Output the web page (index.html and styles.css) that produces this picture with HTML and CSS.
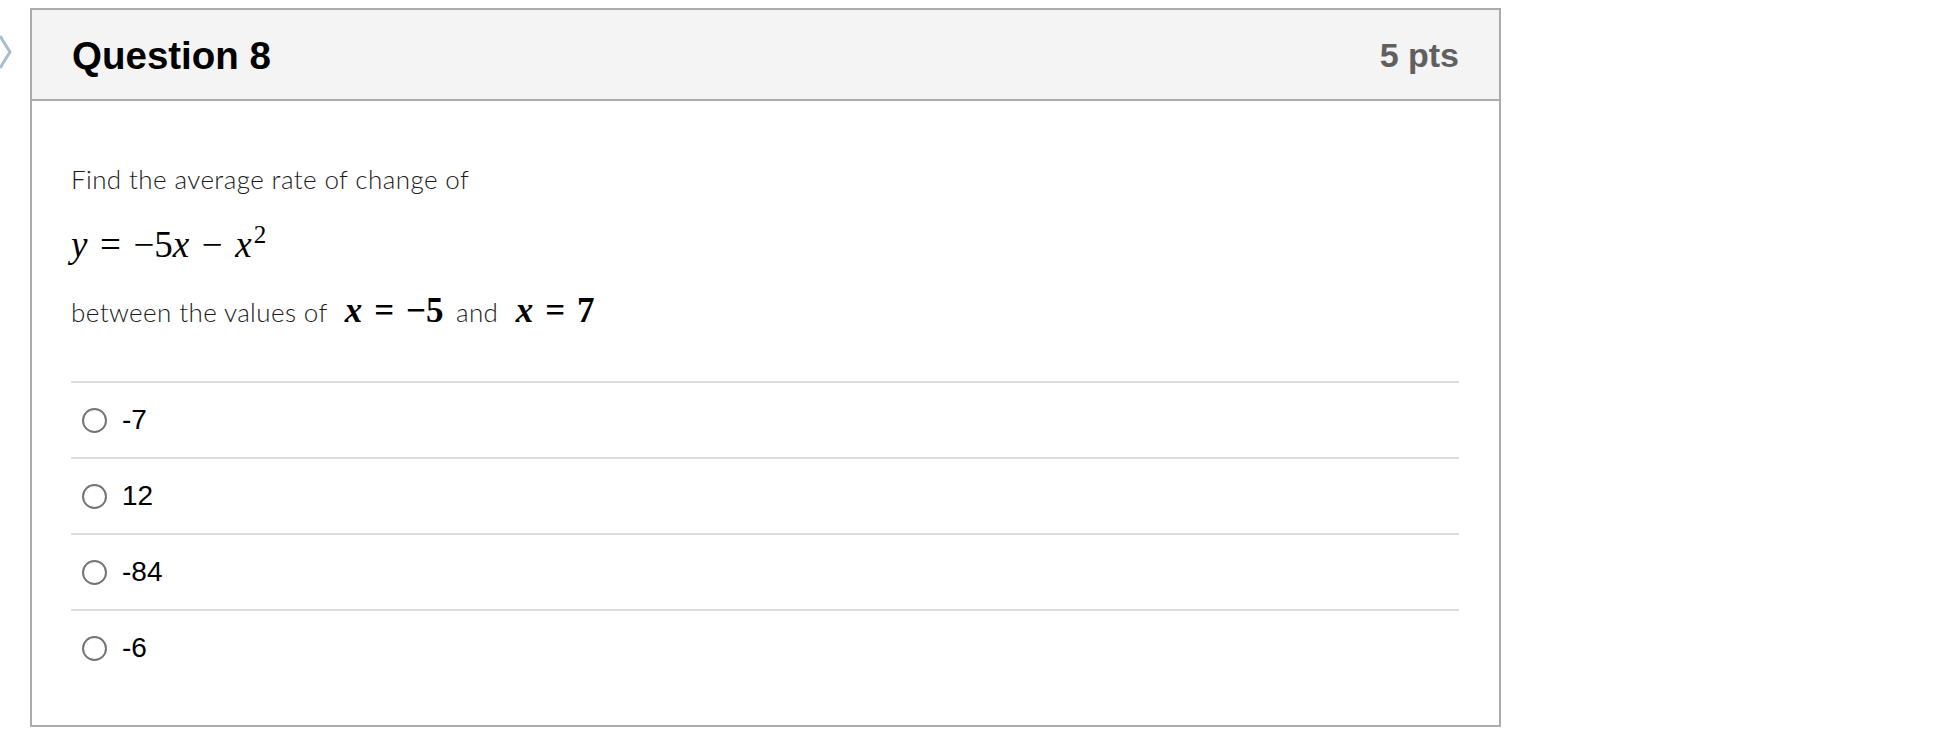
FILE: index.html
```html
<!DOCTYPE html>
<html>
<head>
<meta charset="utf-8">
<link rel="stylesheet" href="styles.css">
</head>
<body>
<div class="page">
  <div class="nav">
    <svg class="chev" width="14" height="34" viewBox="0 0 14 34"><polyline points="1,1 11,17 1,33" fill="none" stroke="#a9bccd" stroke-width="3"/></svg>
  </div>
  <div class="card">
    <div class="card-head">
      <div class="q-title">Question 8</div>
      <div class="q-pts">5 pts</div>
    </div>
    <div class="card-body">
      <p class="q-text">Find the average rate of change of</p>
      <p class="q-math"><span class="mi">y</span><span class="mo">=</span><span class="mn">−5</span><span class="mi">x</span><span class="mo">−</span><span class="mi">x</span><sup class="sup">2</sup></p>
      <p class="q-text">between the values of <span class="bm"><span class="mi">x</span><span class="mo">=</span><span class="mn">−5</span></span> and <span class="bm"><span class="mi">x</span><span class="mo">=</span><span class="mn">7</span></span></p>
      <div class="answers">
        <label class="answer"><span class="radio"></span><span class="a-text">-7</span></label>
        <label class="answer"><span class="radio"></span><span class="a-text">12</span></label>
        <label class="answer"><span class="radio"></span><span class="a-text">-84</span></label>
        <label class="answer"><span class="radio"></span><span class="a-text">-6</span></label>
      </div>
    </div>
  </div>
</div>
</body>
</html>
```
FILE: styles.css
```css
html, body {
  margin: 0;
  padding: 0;
  background: #fff;
}
.page {
  display: flex;
  align-items: flex-start;
  padding-top: 8px;
}
.nav {
  width: 31px;
  flex: none;
  padding-top: 27px;
  margin-left: -1px;
}
.chev {
  display: block;
}
.card {
  width: 1467px;
  border: 2px solid #ababab;
  background: #fff;
}
.card-head {
  height: 87px;
  background: #f4f4f4;
  border-bottom: 2px solid #ababab;
  display: flex;
  align-items: center;
  justify-content: space-between;
  padding: 2px 40px 0 40px;
  font-family: "Liberation Sans", Arial, sans-serif;
  font-weight: bold;
}
.q-title {
  font-size: 38.5px;
  color: #000;
}
.q-pts {
  font-size: 34px;
  color: #606060;
}
.card-body {
  padding: 58px 40px 40px 39px;
}
.q-text {
  margin: 0 0 26px 0;
  line-height: 40px;
  font-family: "Lato", "Liberation Sans", sans-serif;
  font-weight: 300;
  font-size: 26px;
  letter-spacing: 0.4px;
  color: #1a1a1a;
}
.q-math {
  margin: 0 0 26px 0;
  line-height: 40px;
  font-family: "Liberation Serif", "Times New Roman", serif;
  font-size: 37px;
  color: #000;
}
.mi {
  font-style: italic;
}
.mo {
  margin: 0 0.34em;
}
.sup {
  font-size: 0.68em;
  vertical-align: 0.55em;
  line-height: 0;
  margin-left: 2px;
}
.bm {
  font-family: "Liberation Serif", "Times New Roman", serif;
  font-weight: bold;
  font-size: 35px;
  letter-spacing: 0;
  color: #000;
  margin: 0 5px 0 10px;
}
.answers {
  margin-top: 49px;
}
.answer {
  display: flex;
  align-items: center;
  height: 74px;
  border-top: 2px solid #dcdcdc;
  padding-left: 11px;
}
.radio {
  width: 21px;
  height: 21px;
  border: 2px solid #747474;
  border-radius: 50%;
  flex: none;
}
.a-text {
  margin-left: 15px;
  font-family: "Liberation Sans", Arial, sans-serif;
  font-size: 28px;
  color: #000;
}
```
